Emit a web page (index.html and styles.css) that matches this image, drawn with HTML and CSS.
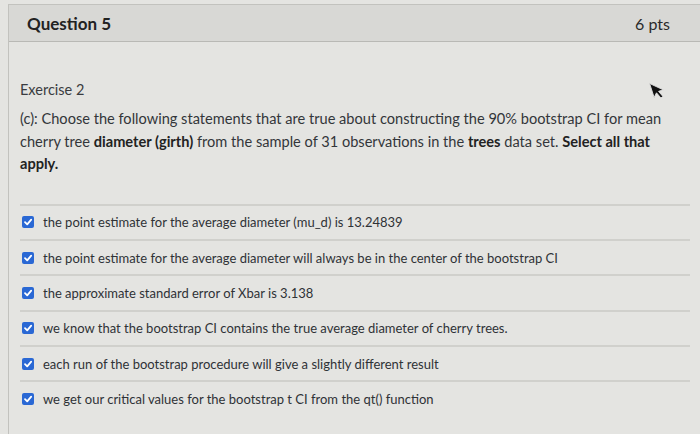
FILE: index.html
```html
<!DOCTYPE html>
<html lang="en">
<head>
<meta charset="utf-8">
<title>Question 5</title>
<link rel="stylesheet" href="styles.css">
</head>
<body>
<div class="card">
  <div class="card-header">
    <h2 class="q-title">Question 5</h2>
    <span class="q-points">6 pts</span>
  </div>
  <div class="card-body">
    <p class="exercise">Exercise 2</p>
    <p class="prompt">(c): Choose the following statements that are true about constructing the 90% bootstrap CI for mean cherry tree <b>diameter (girth)</b> from the sample of 31 observations in the <b>trees</b> data set. <b>Select all that apply.</b></p>
    <ul class="answers">
      <li class="answer"><span class="check"><svg viewBox="0 0 12 12" width="12" height="12"><path d="M3 6.2 L5.2 8.4 L9.2 3.6" fill="none" stroke="#fff" stroke-width="1.8" stroke-linecap="round" stroke-linejoin="round"/></svg></span>the point estimate for the average diameter (mu_d) is 13.24839</li>
      <li class="answer"><span class="check"><svg viewBox="0 0 12 12" width="12" height="12"><path d="M3 6.2 L5.2 8.4 L9.2 3.6" fill="none" stroke="#fff" stroke-width="1.8" stroke-linecap="round" stroke-linejoin="round"/></svg></span>the point estimate for the average diameter will always be in the center of the bootstrap CI</li>
      <li class="answer"><span class="check"><svg viewBox="0 0 12 12" width="12" height="12"><path d="M3 6.2 L5.2 8.4 L9.2 3.6" fill="none" stroke="#fff" stroke-width="1.8" stroke-linecap="round" stroke-linejoin="round"/></svg></span>the approximate standard error of Xbar is 3.138</li>
      <li class="answer"><span class="check"><svg viewBox="0 0 12 12" width="12" height="12"><path d="M3 6.2 L5.2 8.4 L9.2 3.6" fill="none" stroke="#fff" stroke-width="1.8" stroke-linecap="round" stroke-linejoin="round"/></svg></span>we know that the bootstrap CI contains the true average diameter of cherry trees.</li>
      <li class="answer"><span class="check"><svg viewBox="0 0 12 12" width="12" height="12"><path d="M3 6.2 L5.2 8.4 L9.2 3.6" fill="none" stroke="#fff" stroke-width="1.8" stroke-linecap="round" stroke-linejoin="round"/></svg></span>each run of the bootstrap procedure will give a slightly different result</li>
      <li class="answer"><span class="check"><svg viewBox="0 0 12 12" width="12" height="12"><path d="M3 6.2 L5.2 8.4 L9.2 3.6" fill="none" stroke="#fff" stroke-width="1.8" stroke-linecap="round" stroke-linejoin="round"/></svg></span>we get our critical values for the bootstrap t CI from the qt() function</li>
    </ul>
  </div>
</div>
<svg class="cursor" viewBox="0 0 14 20" width="15" height="21"><path d="M1 1 L1 15 L4.5 11.5 L7 17.5 L9.2 16.6 L6.8 10.8 L11.5 10.8 Z" fill="#111" stroke="#ddd" stroke-width="0.8"/></svg>
</body>
</html>
```

FILE: styles.css
```css
html, body {
  margin: 0;
  padding: 0;
}
body {
  background: #e4e4e1;
  font-family: Lato, "Open Sans", "Liberation Sans", sans-serif;
  color: #2f3236;
  width: 700px;
  height: 434px;
  overflow: hidden;
  position: relative;
}
.card {
  margin: 4px 0 0 8px;
  border: 1px solid #c2c2be;
  border-right: none;
  border-bottom: none;
  height: 440px;
}
.card-header {
  height: 36px;
  background: #d8d8d5;
  border-bottom: 1px solid #b9b9b5;
  display: flex;
  align-items: center;
  justify-content: space-between;
  padding: 0 30px 0 18px;
}
.q-title {
  margin: 0;
  font-size: 17px;
  font-weight: 700;
  color: #222;
}
.q-points {
  font-size: 16px;
  color: #2a2a2a;
}
.card-body {
  padding: 39px 10px 0 11px;
}
.exercise {
  margin: 0;
  font-size: 14.5px;
  line-height: 18px;
  color: #3a3c40;
}
.prompt {
  margin: 9px 0 0;
  font-size: 14.6px;
  line-height: 22.5px;
  color: #33363a;
}
.prompt b {
  font-weight: 700;
  color: #222;
}
.answers {
  list-style: none;
  margin: 28px 0 0;
  padding: 0;
}
.answer {
  display: flex;
  align-items: center;
  height: 33.4px;
  box-sizing: content-box;
  border-top: 2px solid #d0d0cc;
  padding: 0 0 3px 2px;
  margin-bottom: -3px;
  font-size: 13px;
  color: #2f3236;
}
.check {
  width: 12px;
  height: 12px;
  border-radius: 2px;
  background: #2a68d4;
  display: flex;
  margin-right: 9px;
  flex: none;
}
.cursor {
  position: absolute;
  left: 651px;
  top: 80px;
  transform: rotate(-18deg);
}
```
